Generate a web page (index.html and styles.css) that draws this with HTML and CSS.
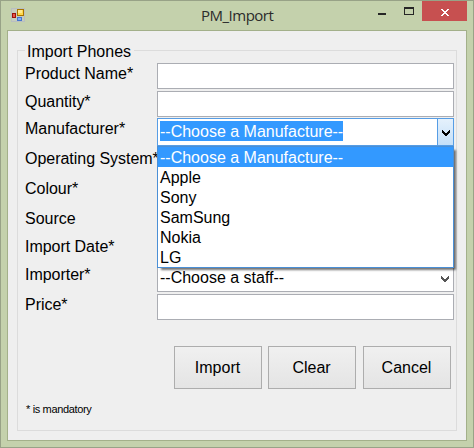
FILE: index.html
```html
<!DOCTYPE html>
<html lang="en">
<head>
<meta charset="utf-8">
<title>PM_Import</title>
<link rel="stylesheet" href="styles.css">
</head>
<body>
<div class="window">
  <header class="titlebar">
    <svg class="app-icon" width="14" height="14" viewBox="0 0 14 14" shape-rendering="crispEdges">
      <rect x=".5" y=".5" width="13" height="13" fill="#c6ccbd" stroke="#b9bfc0"/>
      <rect x="6.5" y="1.5" width="6" height="6" fill="#ffd84a" stroke="#a87400"/>
      <rect x="7" y="2" width="4" height="3" fill="#ffe98c"/>
      <rect x="1.5" y="5.5" width="3" height="4" fill="#e8554a" stroke="#9c120c"/>
      <rect x="6.5" y="9.5" width="4" height="3" fill="#7fb0f5" stroke="#4676d0"/>
    </svg>
    <h1 class="title">PM_Import</h1>
    <svg class="minmax" width="44" height="20" viewBox="0 0 44 20" shape-rendering="crispEdges" fill="#262626">
      <rect x="0" y="12" width="8" height="2"/>
      <path d="M26 6h10v8H26zM27 8v5h8V8z" fill-rule="evenodd"/>
    </svg>
    <button class="close" aria-label="Close">
      <svg width="8" height="7" viewBox="0 0 8 7" shape-rendering="crispEdges" fill="#fff">
        <path d="M0 0h2v1h1v1h2V1h1V0h2v1H7v1H6v1H5v1h1v1h1v1h1v1H6V6H5V5H3v1H2v1H0V6h1V5h1V4h1V3H2V2H1V1H0z"/>
      </svg>
    </button>
  </header>
  <main class="client">
    <fieldset class="group">
      <legend>Import Phones</legend>
      <form class="fields">
        <label>Product Name*</label><div class="box"></div>
        <label>Quantity*</label><div class="box"></div>
        <label>Manufacturer*</label>
        <div class="combo open">
          <span class="value">--Choose a Manufacture--</span>
          <span class="arrow"><svg width="8" height="6" viewBox="0 0 8 6" shape-rendering="crispEdges"><path d="M0 0h1v1h1v1h1v1h2V2h1V1h1V0h1v3H7v1H6v1H5v1H3V5H2V4H1V3H0z"/></svg></span>
          <ul class="menu">
            <li class="active">--Choose a Manufacture--</li>
            <li>Apple</li>
            <li>Sony</li>
            <li>SamSung</li>
            <li>Nokia</li>
            <li>LG</li>
          </ul>
        </div>
        <label>Operating System*</label><div></div>
        <label>Colour*</label><div></div>
        <label>Source</label><div></div>
        <label>Import Date*</label><div></div>
        <label>Importer*</label>
        <div class="combo">
          <span class="value">--Choose a staff--</span>
          <span class="arrow"><svg width="8" height="6" viewBox="0 0 8 6" shape-rendering="crispEdges"><path d="M0 0h1v1h1v1h1v1h2V2h1V1h1V0h1v3H7v1H6v1H5v1H3V5H2V4H1V3H0z"/></svg></span>
        </div>
        <label>Price*</label><div class="box"></div>
      </form>
      <div class="actions">
        <button>Import</button>
        <button>Clear</button>
        <button>Cancel</button>
      </div>
      <p class="note">* is mandatory</p>
    </fieldset>
  </main>
</div>
</body>
</html>
```
FILE: styles.css
```css
* { box-sizing: border-box; }
body {
  margin: 0;
  font: 16px/20px "Liberation Sans", Arial, sans-serif;
  color: #000;
}
button { font: inherit; color: inherit; padding: 0; }
.window {
  width: 474px;
  height: 448px;
  border: 1px solid #98a287;
  background: #c4d1ac;
  padding: 0 6px;
}
.titlebar {
  display: flex;
  height: 29px;
  align-items: flex-start;
}
.app-icon { margin: 7px 0 0 4px; }
.title {
  flex: 1;
  margin: 3px 0 0 13px;
  padding-left: 163px;
  font: 15px/22px "Open Sans", "Noto Sans", sans-serif;
  letter-spacing: -0.5px;
  color: #2b2b2b;
}
.close {
  width: 45px;
  height: 20px;
  padding: 7px 18px 5px 19px;
  border: 0;
  background: #c75050;
}
.close svg { display: block; }
.client {
  height: 411px;
  border: 1px solid #a3b08a;
  background: #efefef;
  padding: 12px 9px 9px;
}
.group {
  height: 388px;
  margin: 0;
  min-width: 0;
  border: 1px solid #dcdcdc;
  padding: 0 2px 0 7px;
}
legend {
  height: 14px;
  padding: 0 3px 0 2px;
  line-height: 18px;
}
.fields {
  display: grid;
  grid-template-columns: 132px 297px;
  grid-template-rows: 28px 27px 30px 30px 30px 28px 28px 30px 26px;
  margin-top: 6px;
}
.fields label { line-height: 22px; white-space: nowrap; letter-spacing: -0.03px; }
.box, .combo {
  height: 26px;
  border: 1px solid #abadb3;
  background: #fff;
}
.combo {
  position: relative;
  display: flex;
  justify-content: space-between;
  height: 28px;
  padding-left: 2px;
}
.value { height: 20px; margin-top: 2px; line-height: 21px; }
.arrow {
  display: flex;
  align-items: center;
  justify-content: center;
  width: 16px;
  padding-top: 1px;
  fill: #555;
}
.combo.open { border-color: #569de5; }
.open .value { background: #39f; color: #fff; }
.open .arrow {
  border-left: 1px solid #569de5;
  background: linear-gradient(#e5f1fc, #c5e0f9);
  fill: #000;
}
.menu {
  position: absolute;
  z-index: 1;
  top: 27px;
  left: -1px;
  width: 297px;
  height: 122px;
  margin: 0;
  padding: 0;
  list-style: none;
  border: 1px solid #4a8fd6;
  background: #fff;
  box-shadow: 3px 3px 2px -1px rgba(0, 0, 0, .55);
}
.menu li { height: 20px; padding-left: 2px; line-height: 22px; }
.menu .active { background: #39f; color: #fff; }
.actions {
  display: flex;
  gap: 6px;
  margin: 26px 0 0 149px;
}
.actions button {
  width: 88px;
  height: 43px;
  padding-right: 1px;
  border: 1px solid #adadad;
  background: linear-gradient(#f0f0f0, #e4e4e4);
}
.actions button:last-child { margin-left: 1px; }
.note {
  margin: 11px 0 0 1px;
  font-size: 11px;
  line-height: 18px;
  letter-spacing: -0.35px;
}
```
